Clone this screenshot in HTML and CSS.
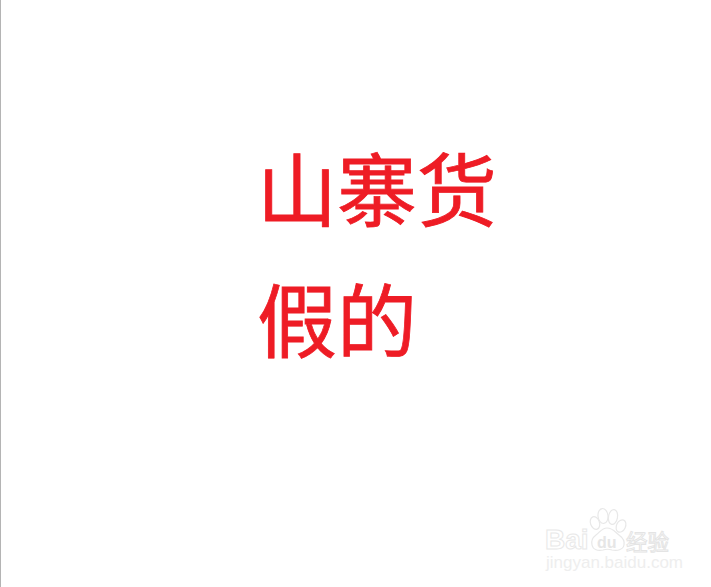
FILE: index.html
```html
<!DOCTYPE html>
<html lang="zh-CN">
<head>
  <meta charset="UTF-8">
  <meta name="viewport" content="width=device-width, initial-scale=1.0">
  <title>山寨货</title>
  <link rel="stylesheet" href="styles.css">
</head>
<body>
  <main class="slide">
    <p class="line">山寨货</p>
    <p class="line">假的</p>
  </main>
  <div class="watermark">
    <svg class="paw" viewBox="0 0 40 46" width="40" height="46">
      <g fill="#fff" stroke="#e8e8e8" stroke-width="1.2">
        <ellipse cx="7" cy="16" rx="4.5" ry="6.5" transform="rotate(-20 7 16)"/>
        <ellipse cx="15" cy="9" rx="5" ry="7.5" transform="rotate(-6 15 9)"/>
        <ellipse cx="25" cy="10" rx="4.5" ry="7.5" transform="rotate(10 25 10)"/>
        <ellipse cx="33" cy="19" rx="4.5" ry="6.5" transform="rotate(25 33 19)"/>
        <path d="M19 21c-5 0-7 4-11 7-4 3-5 6-4 10 1 5 6 6 11 5 3-1 6-1 9 0 5 1 11 0 12-5 1-4-1-7-5-10-4-3-6-7-12-7z"/>
      </g>
    </svg>
    <div class="brand">
      <span class="bai">Bai</span><span class="du">du</span><span class="jingyan">经验</span>
    </div>
    <div class="site">jingyan.baidu.com</div>
  </div>
</body>
</html>
```

FILE: styles.css
```css
html, body {
  height: 100%;
}
body {
  margin: 0;
  background-color: #fff;
  border-left: 1px solid #b4b4b4;
  position: relative;
  overflow: hidden;
  font-family: "Noto Sans CJK SC", "Liberation Sans", sans-serif;
}
.slide {
  padding: 120px 0 0 256px;
}
.line {
  margin: 0;
  font-size: 80px;
  line-height: 131px;
  height: 131px;
  color: #ee1c25;
  -webkit-text-stroke: 0.8px #ee1c25;
}
.watermark {
  position: absolute;
  left: 544px;
  top: 507px;
  width: 130px;
  height: 66px;
}
.paw {
  position: absolute;
  left: 43px;
  top: 0;
}
.brand {
  position: absolute;
  left: 0;
  top: 20px;
  height: 26px;
  display: flex;
  align-items: center;
  white-space: nowrap;
}
.bai {
  width: 52px;
  font-family: "Liberation Sans", sans-serif;
  font-size: 28px;
  font-weight: bold;
  color: #fff;
  -webkit-text-stroke: 1px #e8e8e8;
}
.du {
  position: relative;
  width: 29px;
  margin-top: 6px;
  font-family: "Liberation Sans", sans-serif;
  font-size: 16px;
  font-weight: bold;
  color: #e6e6e6;
}
.jingyan {
  position: relative;
  font-size: 21.5px;
  color: #fff;
  -webkit-text-stroke: 1px #e4e4e4;
}
.site {
  position: absolute;
  left: 1px;
  top: 46px;
  font-family: "Liberation Sans", sans-serif;
  font-size: 17px;
  color: #eeeeee;
  white-space: nowrap;
}
```
